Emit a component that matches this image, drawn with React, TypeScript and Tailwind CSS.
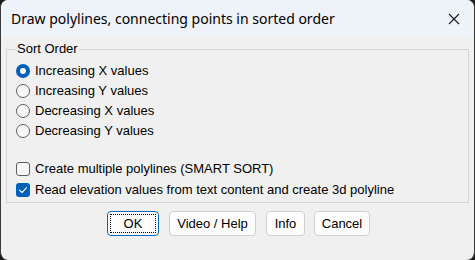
import React, { useState } from 'react';

const font = { fontFamily: '"Liberation Sans", Arial, sans-serif' };

const Radio = ({ checked, label, onClick }: { checked: boolean; label: string; onClick: () => void }) => (
  <div className="flex items-center h-5 cursor-default" onClick={onClick}>
    {checked ? (
      <span className="w-[14px] h-[14px] rounded-full bg-[#005fb8] flex items-center justify-center">
        <span className="w-[6px] h-[6px] rounded-full bg-white" />
      </span>
    ) : (
      <span className="w-[14px] h-[14px] rounded-full border border-[#5f5f5f] bg-[#f7f7f7]" />
    )}
    <span className="ml-[5px] text-[13px] text-black">{label}</span>
  </div>
);

const Check = ({ checked, label, onClick }: { checked: boolean; label: string; onClick: () => void }) => (
  <div className="flex items-center h-[21px] cursor-default" onClick={onClick}>
    {checked ? (
      <span className="w-[14px] h-[14px] rounded-[3px] bg-[#005fb8] flex items-center justify-center">
        <svg width="10" height="10" viewBox="0 0 10 10" fill="none">
          <path d="M1.5 5.2 L4 7.5 L8.6 2.6" stroke="white" strokeWidth="1.1" strokeLinecap="round" strokeLinejoin="round" />
        </svg>
      </span>
    ) : (
      <span className="w-[14px] h-[14px] rounded-[3px] border border-[#5f5f5f] bg-[#f7f7f7]" />
    )}
    <span className="ml-[5px] text-[13px] text-black">{label}</span>
  </div>
);

const App = () => {
  const [sort, setSort] = useState(0);
  const [multi, setMulti] = useState(false);
  const [elev, setElev] = useState(true);

  const options = ['Increasing X values', 'Increasing Y values', 'Decreasing X values', 'Decreasing Y values'];

  return (
    <div className="w-[475px] h-[260px] bg-[#1c1c1c]" style={font}>
      <div className="w-full h-full rounded-[8px] overflow-hidden border-l border-r border-[#3a3a3a] bg-[#f0f0f0] flex flex-col">
        {/* Title bar */}
        <div className="h-[37px] bg-[#eef2f9] flex items-center justify-between pl-[10px] pr-[14px] shrink-0">
          <span className="text-[14px] text-black" style={{ fontFamily: '"Segoe UI", "Noto Sans", sans-serif' }}>
            Draw polylines, connecting points in sorted order
          </span>
          <svg width="12" height="12" viewBox="0 0 12 12">
            <path d="M1 1 L11 11 M11 1 L1 11" stroke="#1a1a1a" strokeWidth="1.1" />
          </svg>
        </div>

        {/* Body */}
        <div className="flex-1 px-[5px] pt-[5px]">
          <fieldset className="border border-[#d5d5d5] h-[161px] pl-[9px] pt-0">
            <legend className="text-[13px] text-black px-[1px] leading-[14px]">Sort Order</legend>
            <div className="mt-[5px]">
              {options.map((o, i) => (
                <Radio key={o} label={o} checked={sort === i} onClick={() => setSort(i)} />
              ))}
            </div>
            <div className="mt-[17px]">
              <Check label="Create multiple polylines (SMART SORT)" checked={multi} onClick={() => setMulti(!multi)} />
              <Check
                label="Read elevation values from text content and create 3d polyline"
                checked={elev}
                onClick={() => setElev(!elev)}
              />
            </div>
          </fieldset>

          <div className="flex gap-[10px] mt-[8px] ml-[101px]">
            <button className="w-[52px] h-[25px] rounded-[4px] border border-[#0067c0] bg-[#fdfdfd] p-[2px] text-[13px] text-black">
              <span className="block w-full h-full border border-dotted border-black flex items-center justify-center">OK</span>
            </button>
            <button className="w-[87px] h-[25px] rounded-[4px] border border-[#d0d0d0] bg-[#fdfdfd] text-[13px] text-black">
              Video / Help
            </button>
            <button className="w-[39px] h-[25px] rounded-[4px] border border-[#d0d0d0] bg-[#fdfdfd] text-[13px] text-black">
              Info
            </button>
            <button className="w-[56px] h-[25px] rounded-[4px] border border-[#d0d0d0] bg-[#fdfdfd] text-[13px] text-black -ml-[1px]">
              Cancel
            </button>
          </div>
        </div>
      </div>
    </div>
  );
};

export default App;
